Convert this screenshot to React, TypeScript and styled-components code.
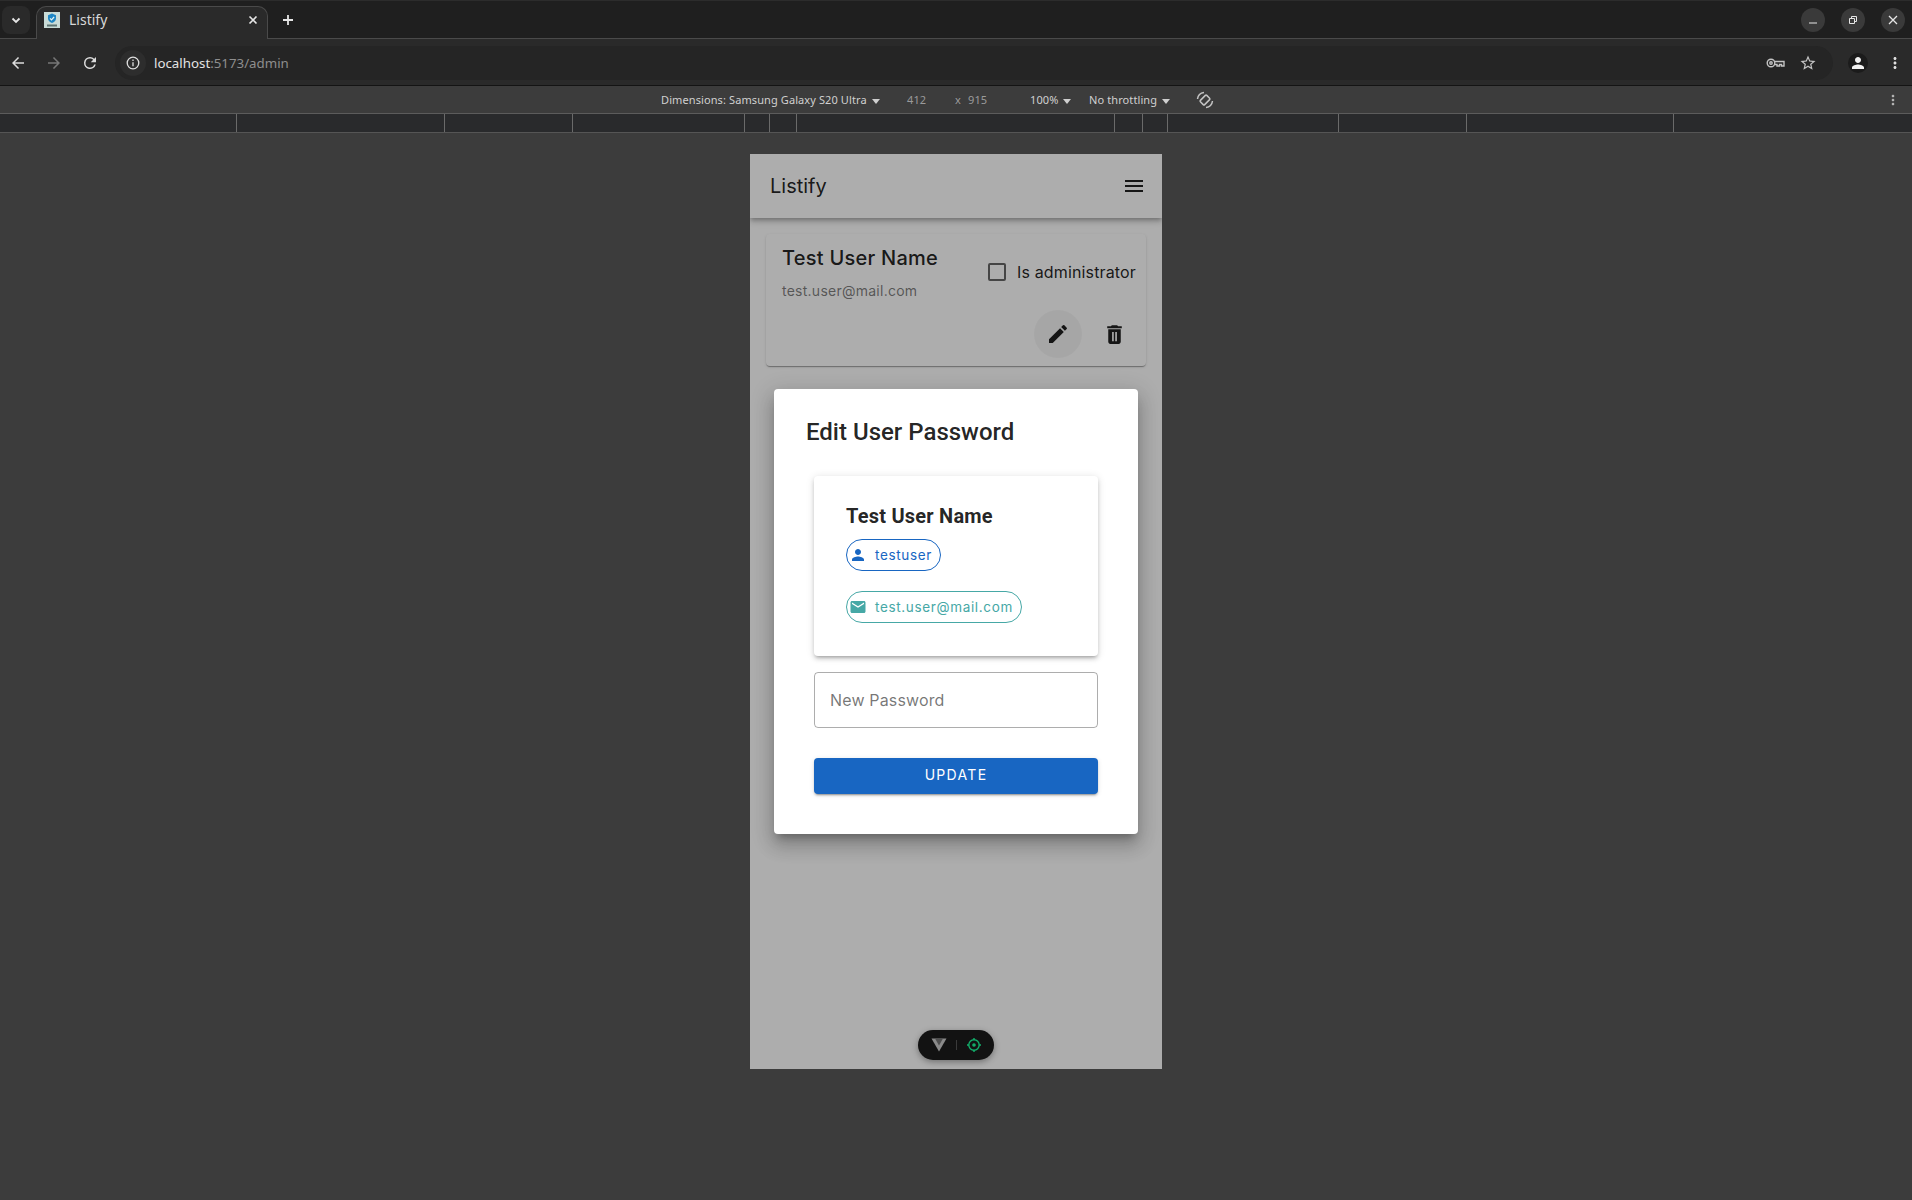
import React from 'react'
import styled, { createGlobalStyle } from 'styled-components'

const chromeFont = `'Noto Sans', 'Liberation Sans', sans-serif`
const pageFont = `Inter, 'Liberation Sans', sans-serif`
const titleFont = `Roboto, 'Liberation Sans', sans-serif`

const blue = '#1866c2'
const teal = '#46a8a6'

const GlobalStyle = createGlobalStyle`
  html, body {
    margin: 0;
    padding: 0;
    height: 100%;
    background: #3c3c3c;
  }
  * {
    box-sizing: border-box;
  }
`

const Page = styled.div`
  width: 1912px;
  height: 1200px;
  display: flex;
  flex-direction: column;
  overflow: hidden;
  background: #3c3c3c;
  font-family: ${chromeFont};
`

const TabStrip = styled.div`
  height: 39px;
  flex: none;
  display: flex;
  align-items: flex-end;
  padding: 0 7px 0 2px;
  background: #1f1f1f;
  border-top: 1px solid #2c2c2c;
  border-bottom: 1px solid #4a4a4a;
`

const TabSearch = styled.div`
  width: 28px;
  height: 28px;
  margin-bottom: 4px;
  border-radius: 8px;
  background: #2a2a2a;
  display: flex;
  align-items: center;
  justify-content: center;
`

const Tab = styled.div`
  width: 232px;
  height: 33px;
  margin-left: 6px;
  margin-bottom: -1px;
  padding: 0 9px 7px 7px;
  display: flex;
  align-items: center;
  gap: 9px;
  background: #2a2a2a;
  border: 1px solid #4a4a4a;
  border-bottom: none;
  border-radius: 10px 10px 0 0;
`

const TabTitle = styled.span`
  flex: 1;
  font-size: 14px;
  color: #d8d8d8;
`

const NewTab = styled.div`
  width: 24px;
  height: 24px;
  margin: 0 auto 6px 8px;
  display: flex;
  align-items: center;
  justify-content: center;
`

const WindowControls = styled.div`
  display: flex;
  gap: 16px;
  margin-bottom: 6px;
`

const WindowButton = styled.div`
  width: 24px;
  height: 24px;
  border-radius: 50%;
  background: #3a3a3a;
  display: flex;
  align-items: center;
  justify-content: center;
`

const Toolbar = styled.div`
  height: 47px;
  flex: none;
  display: flex;
  align-items: center;
  padding: 1px 0 0 6px;
  background: #2a2a2a;
  border-bottom: 1px solid #141414;
`

const NavButton = styled.div<{ $after?: number }>`
  width: 24px;
  height: 24px;
  margin-right: ${(p) => p.$after ?? 12}px;
  display: flex;
  align-items: center;
  justify-content: center;
`

const Omnibox = styled.div`
  width: 1718px;
  height: 34px;
  margin-left: 1px;
  padding: 0 16px 0 5px;
  border-radius: 17px;
  background: #252525;
  display: flex;
  align-items: center;
`

const SiteInfo = styled.div`
  width: 26px;
  height: 26px;
  border-radius: 50%;
  background: #2d2d2d;
  display: flex;
  align-items: center;
  justify-content: center;
  margin-right: 8px;
`

const UrlHost = styled.span`
  font-size: 13.3px;
  color: #e3e3e3;
`

const UrlRest = styled.span`
  font-size: 13.3px;
  color: #8e8e8e;
  flex: 1;
`

const OmniIcons = styled.div`
  display: flex;
  align-items: center;
  gap: 14px;
`

const Avatar = styled.div`
  width: 20px;
  height: 20px;
  margin: 0 15px;
  border-radius: 50%;
  background: #1b1b1b;
  display: flex;
  align-items: center;
  justify-content: center;
`

const DevBar = styled.div`
  height: 28px;
  flex: none;
  display: flex;
  align-items: center;
  padding-left: 661px;
  background: #3c3c3c;
  border-bottom: 1px solid #5c5c5c;
  font-size: 11px;
  letter-spacing: 0.1px;
  color: #d0d0d0;
`

const DevLabel = styled.span<{ $w: number; $dim?: boolean }>`
  flex: none;
  width: ${(p) => p.$w}px;
  color: ${(p) => (p.$dim ? '#9a9a9a' : '#d0d0d0')};
  white-space: nowrap;
`

const Caret = styled.span`
  display: inline-block;
  width: 0;
  height: 0;
  margin-left: 5px;
  vertical-align: 0;
  border-left: 4px solid transparent;
  border-right: 4px solid transparent;
  border-top: 5px solid #cfcfcf;
`

const DevKebab = styled.div`
  margin-left: auto;
  margin-right: 11px;
  display: flex;
`

const Ruler = styled.div`
  height: 19px;
  flex: none;
  display: flex;
  background: #292a2c;
  border-bottom: 1px solid #555;
`

const RulerSegment = styled.div<{ $w: number }>`
  flex: none;
  width: ${(p) => p.$w}px;
  border-right: 1px solid #6a6a6a;

  &:last-child {
    border-right: none;
  }
`

const Stage = styled.div`
  flex: 1;
  display: flex;
  justify-content: center;
  padding-top: 21px;
  background: #3c3c3c;
`

const Device = styled.div`
  position: relative;
  width: 412px;
  height: 915px;
  background: #fff;
  font-family: ${pageFont};
  overflow: hidden;
`

const AppBar = styled.header`
  position: relative;
  z-index: 1;
  height: 64px;
  padding: 0 16px 0 20px;
  display: flex;
  align-items: center;
  justify-content: space-between;
  background: #fff;
  box-shadow: 0 2px 4px -1px rgba(0, 0, 0, 0.2), 0 4px 5px rgba(0, 0, 0, 0.14),
    0 1px 10px rgba(0, 0, 0, 0.12);
`

const Brand = styled.span`
  font-size: 20px;
  color: rgba(0, 0, 0, 0.87);
`

const UserCard = styled.section`
  margin: 16px 16px 0;
  height: 132px;
  padding: 10px 10px 0 16px;
  border-radius: 4px;
  background: #fff;
  box-shadow: 0 2px 1px -1px rgba(0, 0, 0, 0.2), 0 1px 1px rgba(0, 0, 0, 0.14),
    0 1px 3px rgba(0, 0, 0, 0.12);
`

const UserRow = styled.div`
  display: flex;
  justify-content: space-between;
`

const UserName = styled.div`
  font-size: 20px;
  line-height: 28px;
  font-weight: 500;
  letter-spacing: 0.25px;
  color: rgba(0, 0, 0, 0.87);
`

const UserMail = styled.div`
  margin-top: 9px;
  font-size: 14px;
  line-height: 20px;
  letter-spacing: 0.25px;
  color: rgba(0, 0, 0, 0.52);
`

const AdminCheck = styled.label`
  display: flex;
  align-items: center;
  gap: 11px;
  height: 24px;
  margin-top: 16px;
  font-size: 16px;
  letter-spacing: 0.15px;
  color: rgba(0, 0, 0, 0.87);
`

const CheckBox = styled.span`
  width: 18px;
  height: 18px;
  border: 2px solid rgba(0, 0, 0, 0.6);
  border-radius: 2px;
`

const CardActions = styled.div`
  display: flex;
  justify-content: flex-end;
  align-items: center;
  gap: 8px;
  margin: 9px -2px 0 0;
`

const IconAction = styled.div<{ $active?: boolean }>`
  width: 48px;
  height: 48px;
  border-radius: 50%;
  display: flex;
  align-items: center;
  justify-content: center;
  background: ${(p) => (p.$active ? 'rgba(0, 0, 0, 0.04)' : 'transparent')};
`

const Backdrop = styled.div`
  position: absolute;
  inset: 0;
  z-index: 2;
  background: rgba(0, 0, 0, 0.32);
`

const Modal = styled.div`
  position: absolute;
  z-index: 3;
  top: 235px;
  left: 24px;
  width: 364px;
  height: 445px;
  padding: 25px 40px 0;
  border-radius: 4px;
  background: #fff;
  box-shadow: 0 7px 8px -4px rgba(0, 0, 0, 0.26), 0 12px 17px 2px rgba(0, 0, 0, 0.14),
    0 5px 22px 4px rgba(0, 0, 0, 0.12);
`

const ModalTitle = styled.h2`
  margin: 0 0 0 -8px;
  font-family: ${titleFont};
  font-size: 24px;
  line-height: 36px;
  font-weight: 500;
  color: rgba(0, 0, 0, 0.87);
`

const SummaryCard = styled.div`
  margin-top: 26px;
  height: 180px;
  padding: 24px 32px;
  border-radius: 4px;
  background: #fff;
  box-shadow: 0 3px 3px -2px rgba(0, 0, 0, 0.2), 0 3px 4px rgba(0, 0, 0, 0.14),
    0 1px 8px rgba(0, 0, 0, 0.12);
`

const SummaryName = styled.div`
  margin-bottom: 7px;
  font-family: ${titleFont};
  font-size: 20px;
  line-height: 32px;
  font-weight: 700;
  letter-spacing: 0.22px;
  color: rgba(0, 0, 0, 0.87);
`

const Chip = styled.div<{ $color: string; $gap: number }>`
  display: flex;
  align-items: center;
  width: fit-content;
  height: 32px;
  margin-top: ${(p) => p.$gap}px;
  padding: 0 8px 0 2px;
  border: 1px solid ${(p) => p.$color};
  border-radius: 16px;
  color: ${(p) => p.$color};
  font-size: 13.5px;
  letter-spacing: 0.65px;
`

const ChipIcon = styled.span`
  display: flex;
  margin-right: 8px;
`

const PasswordField = styled.div`
  height: 56px;
  margin-top: 16px;
  padding: 0 15px;
  display: flex;
  align-items: center;
  border: 1px solid rgba(0, 0, 0, 0.32);
  border-radius: 4px;
  font-size: 16px;
  letter-spacing: 0.15px;
  color: rgba(0, 0, 0, 0.55);
`

const UpdateButton = styled.button`
  display: block;
  width: 100%;
  height: 36px;
  margin-top: 30px;
  padding: 0 0 3px;
  border: none;
  border-radius: 4px;
  background: ${blue};
  box-shadow: 0 3px 1px -2px rgba(0, 0, 0, 0.2), 0 2px 2px rgba(0, 0, 0, 0.14),
    0 1px 5px rgba(0, 0, 0, 0.12);
  color: #fff;
  font-family: ${pageFont};
  font-size: 14px;
  font-weight: 400;
  letter-spacing: 1.3px;
`

const InspectorPill = styled.div`
  position: absolute;
  z-index: 4;
  left: 168px;
  bottom: 9px;
  width: 76px;
  height: 30px;
  border-radius: 15px;
  background: #121212;
  box-shadow: 0 2px 6px rgba(0, 0, 0, 0.35);
  display: flex;
  align-items: center;
  justify-content: center;
  gap: 9px;
`

const PillDivider = styled.span`
  width: 1px;
  height: 10px;
  background: #3a3a3a;
`

const rulerWidths = [237, 208, 128, 172, 25, 27, 318, 28, 25, 171, 128, 207, 238]

const Icon = ({ d, size, color }: { d: string; size: number; color: string }) => (
  <svg width={size} height={size} viewBox="0 0 24 24" fill={color}>
    <path d={d} />
  </svg>
)

const paths = {
  menu: 'M3 18h18v-2H3v2zm0-5h18v-2H3v2zm0-7v2h18V6H3z',
  edit: 'M3 17.25V21h3.75L17.81 9.94l-3.75-3.75L3 17.25zM20.71 7.04c.39-.39.39-1.02 0-1.41l-2.34-2.34a.9959.9959 0 0 0-1.41 0l-1.83 1.83 3.75 3.75 1.83-1.83z',
  trash: 'M6 19c0 1.1.9 2 2 2h8c1.1 0 2-.9 2-2V7H6v12zm3.7-9.5h1.6v9H9.7v-9zm3 0h1.6v9h-1.6v-9zM19 4h-3.5l-1-1h-5l-1 1H5v2h14V4z',
  person: 'M12 12c2.21 0 4-1.79 4-4s-1.79-4-4-4-4 1.79-4 4 1.79 4 4 4zm0 2c-2.67 0-8 1.34-8 4v2h16v-2c0-2.66-5.33-4-8-4z',
  mail: 'M20 4H4c-1.1 0-1.99.9-1.99 2L2 18c0 1.1.9 2 2 2h16c1.1 0 2-.9 2-2V6c0-1.1-.9-2-2-2zm0 4l-8 5-8-5V6l8 5 8-5v2z',
  back: 'M20 11H7.83l5.59-5.59L12 4l-8 8 8 8 1.41-1.41L7.83 13H20v-2z',
  forward: 'M12 4l-1.41 1.41L16.17 11H4v2h12.17l-5.58 5.59L12 20l8-8z',
  reload: 'M17.65 6.35A7.96 7.96 0 0 0 12 4a8 8 0 1 0 7.73 10h-2.08A6 6 0 1 1 12 6c1.66 0 3.14.69 4.22 1.78L13 11h7V4l-2.35 2.35z',
  star: 'M22 9.24l-7.19-.62L12 2 9.19 8.63 2 9.24l5.46 4.73L5.82 21 12 17.27 18.18 21l-1.63-7.03L22 9.24zM12 15.4l-3.76 2.27 1-4.28-3.32-2.88 4.38-.38L12 6.1l1.71 4.04 4.38.38-3.32 2.88 1 4.28L12 15.4z',
  kebab: 'M12 8c1.1 0 2-.9 2-2s-.9-2-2-2-2 .9-2 2 .9 2 2 2zm0 2c-1.1 0-2 .9-2 2s.9 2 2 2 2-.9 2-2-.9-2-2-2zm0 6c-1.1 0-2 .9-2 2s.9 2 2 2 2-.9 2-2-.9-2-2-2z',
}

const Favicon = () => (
  <svg width="16" height="16" viewBox="0 0 16 16">
    <rect width="16" height="16" fill="#c9dcd8" />
    <path d="M8 1.5l4 1.8v3.3c0 2.2-1.8 3.6-4 4.4-2.2-.8-4-2.2-4-4.4V3.3z" fill="#1f86c4" />
    <path d="M6 6.3l1.5 1.5 2.6-2.8" fill="none" stroke="#e8f4f2" strokeWidth="1.2" />
    <rect x="3" y="12.5" width="10" height="2" fill="#5d7472" />
  </svg>
)

export default function App() {
  return (
    <Page>
      <GlobalStyle />
      <TabStrip>
        <TabSearch>
          <svg width="12" height="12" viewBox="0 0 12 12" fill="none" stroke="#e6e6e6" strokeWidth="1.8">
            <path d="M2.5 4.5L6 8l3.500-3.500" />
          </svg>
        </TabSearch>
        <Tab>
          <Favicon />
          <TabTitle>Listify</TabTitle>
          <svg width="10" height="10" viewBox="0 0 10 10" stroke="#e6e6e6" strokeWidth="1.6">
            <path d="M1.5 1.5l7 7M8.5 1.5l-7 7" />
          </svg>
        </Tab>
        <NewTab>
          <svg width="12" height="12" viewBox="0 0 12 12" stroke="#e6e6e6" strokeWidth="1.8">
            <path d="M6 1v10M1 6h10" />
          </svg>
        </NewTab>
        <WindowControls>
          <WindowButton>
            <svg width="10" height="10" viewBox="0 0 10 10" stroke="#e6e6e6" strokeWidth="1">
              <path d="M1 8h8" />
            </svg>
          </WindowButton>
          <WindowButton>
            <svg width="10" height="10" viewBox="0 0 10 10" fill="none" stroke="#e6e6e6" strokeWidth="1">
              <path d="M1.5 3.5h5v5h-5zM3.500 3.500v-2h5v5h-2" />
            </svg>
          </WindowButton>
          <WindowButton>
            <svg width="10" height="10" viewBox="0 0 10 10" stroke="#e6e6e6" strokeWidth="1.3">
              <path d="M1 1l8 8M9 1l-8 8" />
            </svg>
          </WindowButton>
        </WindowControls>
      </TabStrip>

      <Toolbar>
        <NavButton><Icon d={paths.back} size={18} color="#dcdcdc" /></NavButton>
        <NavButton><Icon d={paths.forward} size={18} color="#777" /></NavButton>
        <NavButton><Icon d={paths.reload} size={18} color="#dcdcdc" /></NavButton>
        <Omnibox>
          <SiteInfo>
            <svg width="16" height="16" viewBox="0 0 16 16" fill="none" stroke="#e0e0e0" strokeWidth="1.3">
              <circle cx="8" cy="8" r="5.8" />
              <path d="M8 7.2v4M8 4.6v1.3" />
            </svg>
          </SiteInfo>
          <UrlHost>localhost</UrlHost>
          <UrlRest>:5173/admin</UrlRest>
          <OmniIcons>
            <svg width="19" height="12" viewBox="0 0 19 12" fill="none" stroke="#c4c4c4" strokeWidth="1.4">
              <circle cx="5" cy="6" r="3.8" />
              <circle cx="5" cy="6" r="1.2" />
              <path d="M8.8 4.5H18V9h-2.500V7.500h-2V9H11V7.500H8.800" />
            </svg>
            <Icon d={paths.star} size={18} color="#c4c4c4" />
          </OmniIcons>
        </Omnibox>
        <Avatar>
          <Icon d={paths.person} size={18} color="#f2f2f2" />
        </Avatar>
        <NavButton $after={0}>
          <Icon d={paths.kebab} size={18} color="#e0e0e0" />
        </NavButton>
      </Toolbar>

      <DevBar>
        <DevLabel $w={246}>Dimensions: Samsung Galaxy S20 Ultra<Caret /></DevLabel>
        <DevLabel $w={48} $dim>412</DevLabel>
        <DevLabel $w={13} $dim>x</DevLabel>
        <DevLabel $w={62} $dim>915</DevLabel>
        <DevLabel $w={59}>100%<Caret /></DevLabel>
        <DevLabel $w={106}>No throttling<Caret /></DevLabel>
        <svg width="20" height="20" viewBox="0 0 20 20" fill="none" stroke="#c4c4c4" strokeWidth="1.5">
          <rect x="7" y="5.5" width="6" height="9" rx="1" transform="rotate(45 10 10)" />
          <path d="M2.5 9A7.5 7.5 0 0 1 9 2.5M17.5 11A7.5 7.5 0 0 1 11 17.5" />
        </svg>
        <DevKebab><Icon d={paths.kebab} size={16} color="#b5b5b5" /></DevKebab>
      </DevBar>

      <Ruler>
        {rulerWidths.map((w, i) => (
          <RulerSegment key={i} $w={w} />
        ))}
      </Ruler>

      <Stage>
        <Device>
          <AppBar>
            <Brand>Listify</Brand>
            <Icon d={paths.menu} size={24} color="rgba(0,0,0,0.87)" />
          </AppBar>
          <UserCard>
            <UserRow>
              <div>
                <UserName>Test User Name</UserName>
                <UserMail>test.user@mail.com</UserMail>
              </div>
              <AdminCheck>
                <CheckBox />
                Is administrator
              </AdminCheck>
            </UserRow>
            <CardActions>
              <IconAction $active><Icon d={paths.edit} size={24} color="rgba(0,0,0,0.87)" /></IconAction>
              <IconAction><Icon d={paths.trash} size={25} color="rgba(0,0,0,0.87)" /></IconAction>
            </CardActions>
          </UserCard>

          <Backdrop />
          <Modal>
            <ModalTitle>Edit User Password</ModalTitle>
            <SummaryCard>
              <SummaryName>Test User Name</SummaryName>
              <Chip $color={blue} $gap={0}>
                <ChipIcon><Icon d={paths.person} size={18} color={blue} /></ChipIcon>
                testuser
              </Chip>
              <Chip $color={teal} $gap={20}>
                <ChipIcon><Icon d={paths.mail} size={18} color={teal} /></ChipIcon>
                test.user@mail.com
              </Chip>
            </SummaryCard>
            <PasswordField>New Password</PasswordField>
            <UpdateButton>UPDATE</UpdateButton>
          </Modal>

          <InspectorPill>
            <svg width="16" height="14" viewBox="0 0 16 14">
              <path d="M0.5 0.5h15L8 13.5z" fill="#8a8a8a" />
              <path d="M4 0.5h8L8 7.5z" fill="#4f4f4f" />
            </svg>
            <PillDivider />
            <svg width="16" height="16" viewBox="0 0 16 16" fill="none" stroke="#13b06c" strokeWidth="1.4">
              <circle cx="8" cy="8" r="5.2" />
              <circle cx="8" cy="8" r="1.1" fill="#13b06c" />
              <path d="M8 1v1.800M8 13.200V15M1 8h1.800M13.200 8H15" />
            </svg>
          </InspectorPill>
        </Device>
      </Stage>
    </Page>
  )
}
